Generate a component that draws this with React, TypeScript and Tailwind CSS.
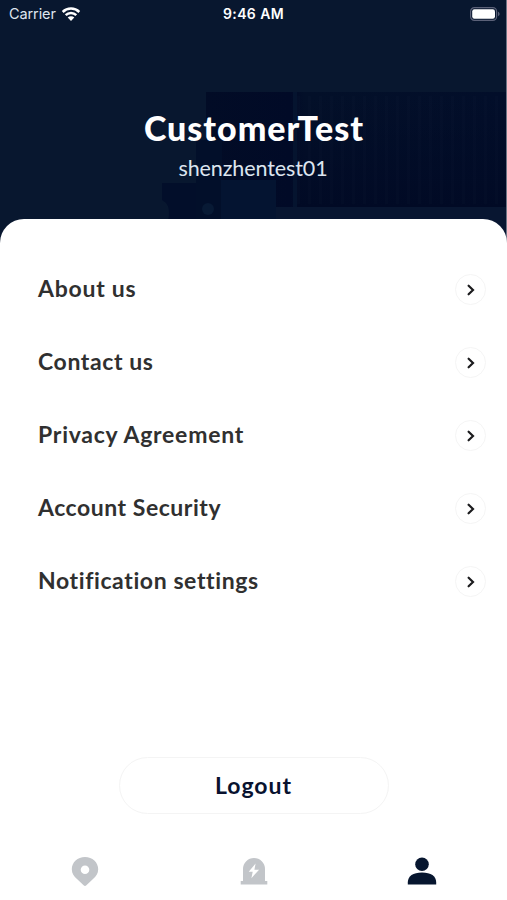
import React, { useState } from 'react';

interface MenuItem {
    id: string;
    label: string;
    className: string;
}

const menuItems: MenuItem[] = [
    { id: 'about', label: 'About us', className: 'tracking-[0.75px]' },
    { id: 'contact', label: 'Contact us', className: 'tracking-[0.6px]' },
    { id: 'privacy', label: 'Privacy Agreement', className: 'tracking-[0.75px]' },
    { id: 'security', label: 'Account Security', className: 'tracking-[0.53px]' },
    { id: 'notifications', label: 'Notification settings', className: 'tracking-[0.6px]' },
];

const WifiIcon: React.FC = () => (
    <svg width="20" height="15" viewBox="0 0 20 15" fill="none" stroke="white" strokeWidth="2.5">
        <path d="M1.7 5a11.8 11.8 0 0 1 16.6 0" />
        <path d="M4.7 8.1a7.5 7.5 0 0 1 10.6 0" />
        <path d="M10 14 6.7 10.6a4.7 4.7 0 0 1 6.6 0Z" fill="white" stroke="none" />
    </svg>
);

const BatteryIcon: React.FC = () => (
    <svg width="30" height="14" viewBox="0 0 30 14">
        <rect x="0.6" y="0.6" width="26" height="12.8" rx="3.8" fill="none" stroke="#5b6178" strokeWidth="1.2" />
        <rect x="2.2" y="2.2" width="22.8" height="9.6" rx="2.2" fill="white" />
        <path d="M28 4.8c1 .4 1.6 1.2 1.6 2.2S29 8.8 28 9.2Z" fill="#5b6178" />
    </svg>
);

const ChevronIcon: React.FC = () => (
    <svg width="8" height="12" viewBox="0 0 8 12" fill="none" stroke="#1c1c1e" strokeWidth="2.2">
        <path d="m1.6 1.7 4.4 4.3-4.4 4.3" strokeLinecap="round" />
    </svg>
);

const PinIcon: React.FC = () => (
    <svg width="28" height="30" viewBox="0 0 28 30" fill="currentColor">
        <path
            fillRule="evenodd"
            d="M14 1C6.6 1 .8 6.4.8 13.2c0 4.2 2.2 7.3 5.2 9.9l6.6 6.2a2 2 0 0 0 2.8 0l6.6-6.2c3-2.6 5.2-5.7 5.2-9.9C27.2 6.400 21.4 1 14 1Zm0 8.500a4.300 4.300 0 1 1 0 8.600 4.300 4.300 0 0 1 0-8.600Z"
        />
    </svg>
);

const AlarmIcon: React.FC = () => (
    <svg width="28" height="30" viewBox="0 0 28 30">
        <path d="M3 25V13a11 11 0 0 1 22 0v12h2.3v3.4H.7V25Z" fill="currentColor" />
        <path d="M15.600 7.500 8.700 15.800h4l-1.300 6.400 7.700-8.500h-4.700Z" fill="white" />
    </svg>
);

const UserIcon: React.FC = () => (
    <svg className="-ml-[2px]" width="30" height="30" viewBox="0 0 30 30" fill="currentColor">
        <circle cx="15" cy="8.3" r="6.8" />
        <path d="M0.8 28.4V26.5C0.8 20 6 16.4 15 16.400S29.2 20 29.2 26.5v1.9Z" />
    </svg>
);

// Faint silhouette of a truck and containers behind the profile name
const HeaderBackdrop: React.FC = () => (
    <svg className="absolute inset-0" width="506" height="250" viewBox="0 0 506 250">
        <defs>
            <linearGradient id="container" x1="0" x2="1" y1="0" y2="0">
                <stop offset="0" stopColor="#020c26" />
                <stop offset="0.28" stopColor="#010a27" />
                <stop offset="0.33" stopColor="#031029" />
                <stop offset="1" stopColor="#020e2a" />
            </linearGradient>
            <linearGradient id="fade" x1="0" x2="0" y1="0" y2="1">
                <stop offset="0" stopColor="#010a25" stopOpacity="0" />
                <stop offset="1" stopColor="#010a25" />
            </linearGradient>
            <pattern id="ribs" width="11" height="10" patternUnits="userSpaceOnUse">
                <rect width="3" height="10" fill="#0a1b36" opacity="0.15" />
            </pattern>
        </defs>
        <rect x="206" y="92" width="300" height="158" fill="url(#container)" />
        <rect x="296" y="96" width="210" height="112" fill="url(#fade)" />
        <rect x="296" y="96" width="210" height="108" fill="url(#ribs)" />
        <path d="M162 183h48v67h-48v-22c5-4 7-8 7-15s-2-10-7-13Z" fill="#020e2a" />
        <rect x="196" y="140" width="26" height="110" fill="#020f2a" />
        <rect x="221" y="180" width="55" height="70" fill="#041431" />
        <circle cx="208" cy="209" r="6" fill="#081a35" />
        <rect x="276" y="207" width="230" height="43" fill="#081631" />
        <rect x="293" y="92" width="4" height="115" fill="#05142f" />
    </svg>
);

const tabs = [
    { id: 'map', icon: <PinIcon /> },
    { id: 'alarms', icon: <AlarmIcon /> },
    { id: 'profile', icon: <UserIcon /> },
];

export default function App() {
    const [activeTab, setActiveTab] = useState('profile');

    return (
        <div className="w-[507px] h-[900px] flex flex-col bg-white overflow-hidden font-['Lato',sans-serif]">
            {/* Header */}
            <header className="relative h-[250px] shrink-0 bg-[#08172f] border-r border-[#6d7585] text-white">
                <HeaderBackdrop />
                <div className="relative grid grid-cols-3 items-center h-7 pl-[9px] pr-[6px] font-['Inter',sans-serif] text-[14.5px]">
                    <div className="flex items-center gap-[5px] text-[#dfe5ee]">
                        <span className="tracking-[-0.1px]">Carrier</span>
                        <WifiIcon />
                    </div>
                    <span className="-ml-[2px] text-center font-semibold text-sm tracking-[0.4px]">9:46 AM</span>
                    <div className="flex justify-end">
                        <BatteryIcon />
                    </div>
                </div>
                <div className="relative flex flex-col items-center pt-[79px]">
                    <h1 className="pl-[2px] text-[34px] leading-[42px] font-black tracking-[1px]">CustomerTest</h1>
                    <p className="mt-[6px] text-[21.5px] leading-[26px] tracking-[-0.1px] text-[#dde5ef]">shenzhentest01</p>
                </div>
            </header>

            {/* Content */}
            <main className="relative -mt-[31px] flex-1 flex flex-col bg-white rounded-t-[24px]">
                <nav className="pt-[34px] pl-[38px] pr-[21px]">
                    {menuItems.map((item) => (
                        <button key={item.id} className="w-full h-[73px] flex items-center justify-between">
                            <span className={`pb-[3px] text-[23px] leading-7 font-bold text-[#303030] whitespace-nowrap ${item.className}`}>
                                {item.label}
                            </span>
                            <span className="w-[31px] h-[31px] rounded-full border border-[#f5f5f5] flex items-center justify-center">
                                <ChevronIcon />
                            </span>
                        </button>
                    ))}
                </nav>

                <button className="mt-[139px] mx-auto w-[270px] h-[57px] rounded-full border border-[#f4f4f4] text-[23px] font-bold tracking-[1px] text-[#08122f]">
                    Logout
                </button>
            </main>

            {/* Tab bar */}
            <footer className="h-[58px] shrink-0 grid grid-cols-3 items-center">
                {tabs.map((tab) => (
                    <button
                        key={tab.id}
                        onClick={() => setActiveTab(tab.id)}
                        className={`flex justify-center ${activeTab === tab.id ? 'text-[#07162f]' : 'text-[#c2c5c9]'}`}
                    >
                        {tab.icon}
                    </button>
                ))}
            </footer>
        </div>
    );
}
